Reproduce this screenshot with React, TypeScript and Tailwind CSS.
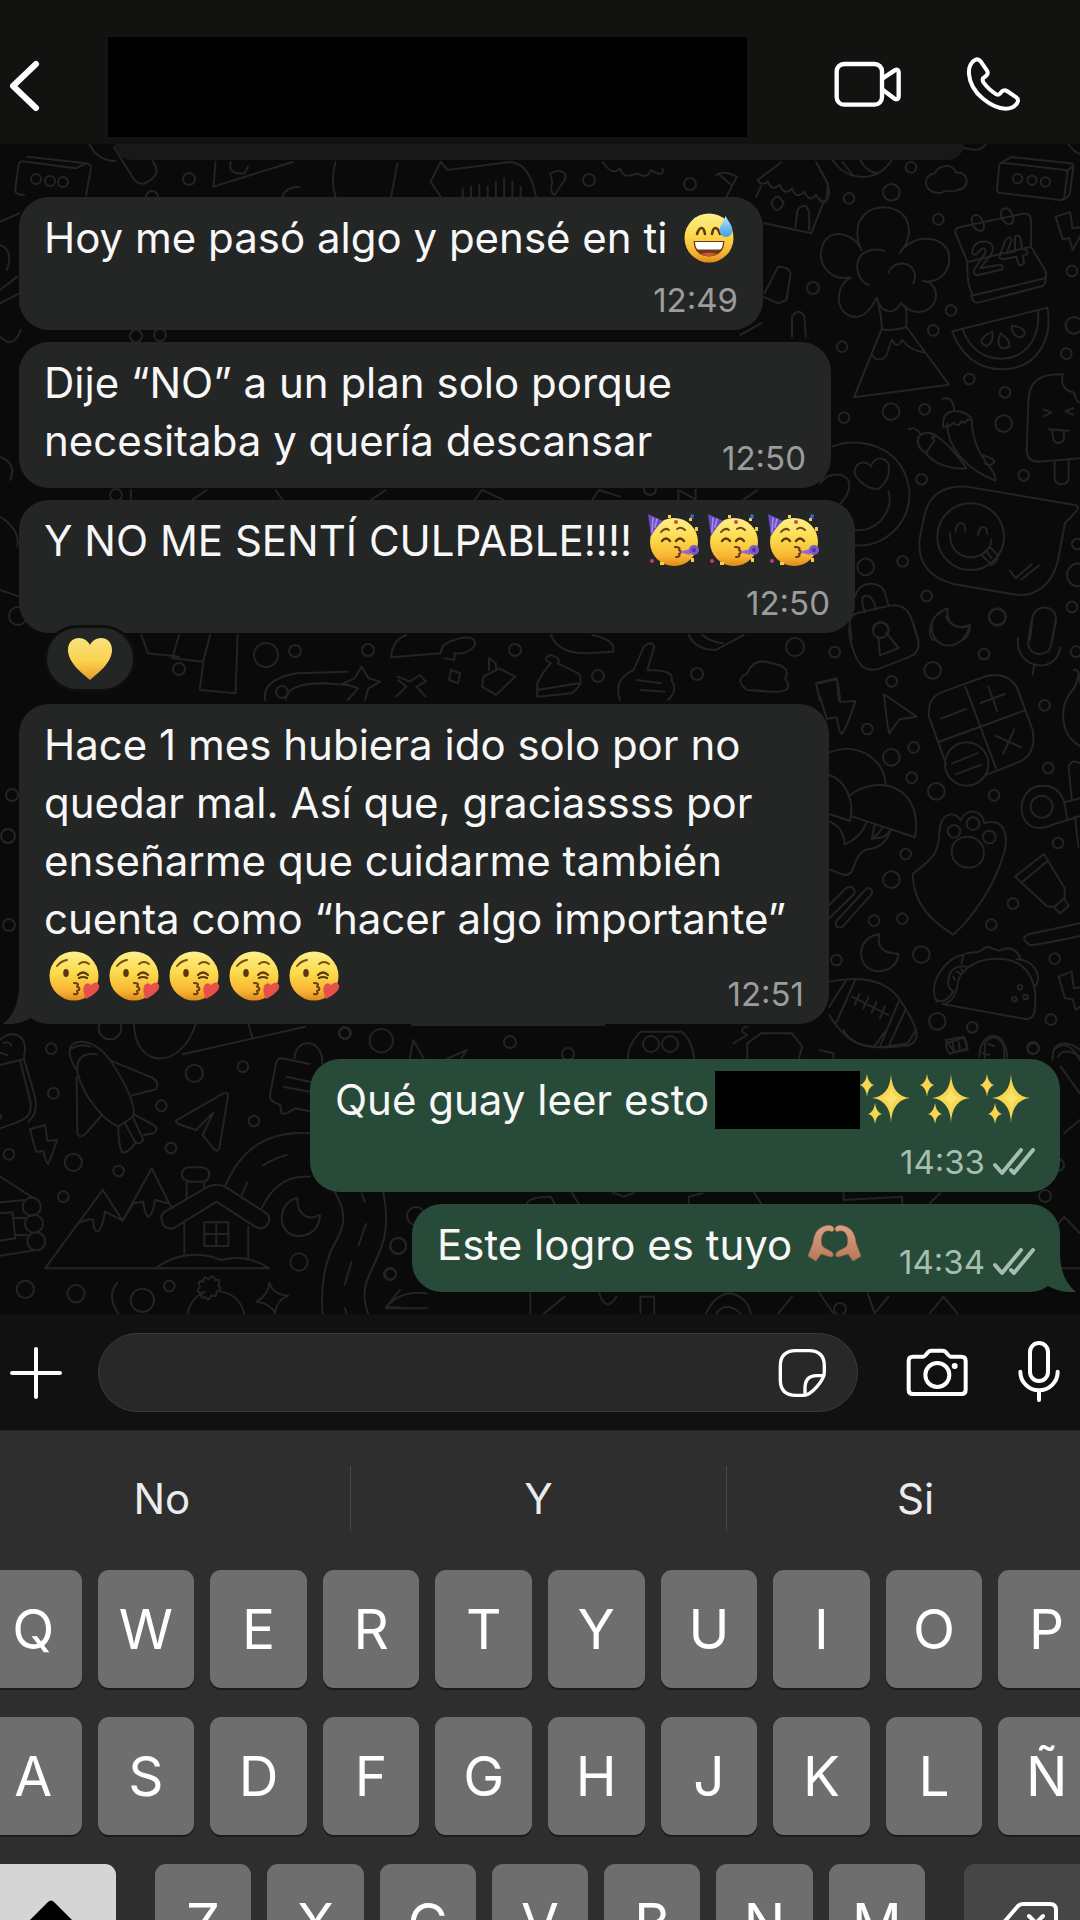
import type { ReactNode } from "react";

type Circle = [number, number, number];

interface DoodleGroup {
  transform: string;
  circles: Circle[];
  paths: string[];
}

// line drawings behind the conversation, grouped by area
const doodles: DoodleGroup[] = [
  {
    // upper right
    transform: "translate(820 140) scale(0.3333)",
    circles: [
      [214, 157, 25], [213, 815, 25], [551, 851, 25], [137, 1281, 25], [532, 1430, 25], [762, 556, 25], [775, 1305, 34],
      [273, 82, 16], [87, 175, 16], [355, 238, 16], [756, 393, 16], [393, 511, 16], [340, 571, 16], [66, 620, 16],
      [739, 641, 16], [448, 717, 16], [555, 757, 16], [314, 808, 16], [72, 833, 16], [611, 1006, 16], [305, 1018, 16],
      [248, 1264, 16], [320, 1368, 16], [756, 1401, 16], [772, 1212, 16],
      [593, 116, 14], [636, 121, 14], [676, 126, 14], [452, 1190, 100], [182, 1470, 24],
    ],
    paths: [
      "M38 60C80 125 170 130 215 60M68 66L98 105M122 62Q140 95 168 98M427 22Q480 40 497 12M745 12Q760 35 780 42M0 90Q40 150 22 178Q10 190 0 178",
      "M350 158C310 155 305 105 345 100C350 75 400 68 408 98C445 92 455 145 412 150C400 160 385 150 375 153Q362 162 350 158Z",
      "M545 68L735 90Q743 92 742 100L733 172Q730 182 720 180L538 158Q530 156 531 148L538 76Q540 68 548 66L575 51L752 70Q762 72 760 82L750 160Q745 172 732 178M742 92L758 78",
      "M124 330C108 300 108 255 124 236C150 190 230 190 258 236C276 270 266 310 238 340M124 330C105 280 30 260 8 315C-12 370 30 425 92 412M146 435C105 420 98 350 140 335Q165 323 192 333M205 398C220 365 265 360 281 392Q290 412 280 430M240 338C280 280 365 285 385 335C398 390 360 432 308 423M92 412C45 440 45 510 90 528C130 540 150 510 170 474C185 525 225 525 243 488C270 525 320 525 342 490C358 455 340 425 308 423",
      "M175 490Q185 530 186 568Q220 574 258 562Q262 525 256 498M184 570L102 772L387 734L262 564M154 640Q165 665 190 656C210 645 205 605 217 600C225 620 235 620 247 600C265 625 290 635 315 638",
      "M442 366L407 280Q403 266 418 262L605 222Q632 216 633 242V320L675 390Q682 405 675 415L460 466Q440 440 442 370ZM452 466L460 482Q464 490 475 488L668 438Q680 430 677 408M442 366L633 320",
      "M455 240Q455 225 470 224Q485 228 492 255Q495 272 480 273Q460 270 455 240ZM542 218Q545 205 560 205Q575 210 580 235Q580 253 566 253Q545 248 542 218Z",
      "M456 336Q462 300 500 305Q530 315 512 345L480 385L540 374Q550 376 548 388L475 405Q458 405 462 390L495 340Q500 322 485 326L468 344Q456 345 456 336ZM556 300Q568 285 575 300L560 340L585 334V290Q598 280 602 298L606 328Q625 325 622 342L608 348L612 370Q600 382 594 370L590 350L548 358Q535 355 540 345Z",
      "M397 574L682 503C700 600 650 688 545 688C470 688 420 640 397 574ZM428 568C450 625 485 656 545 656C620 655 662 590 654 512",
      "M518 575Q484 590 484 605Q490 618 502 617Q520 610 518 575ZM542 580Q530 605 540 620Q552 630 567 620Q575 605 542 580ZM575 557Q575 585 597 592Q615 590 614 575Q605 560 575 557Z",
      "M728 703C650 700 625 730 625 790L620 930Q622 965 655 965L780 955M728 703Q720 745 752 755Q765 755 766 770Q770 785 780 788M704 965V1010Q704 1033 725 1033Q746 1033 746 1010V960M671 808L695 818L673 828M760 804L736 814L760 824M686 868L746 872M697 870L699 895Q702 910 718 909Q732 906 732 892V872",
      "M368 776Q400 768 403 812M370 860Q365 820 400 813Q440 812 455 838L440 840Q435 855 425 843Q415 865 400 848Q385 865 368 858M382 850C380 920 440 990 526 1022C530 980 460 960 455 840M266 868Q285 858 300 880M318 940Q285 920 296 890Q320 868 350 888L335 892Q350 905 335 912Q325 930 318 940M350 888C380 910 400 930 440 985C390 990 340 970 318 940M488 945Q530 960 522 968Q510 980 495 970",
      "M37 920C120 885 250 920 268 1050C275 1150 190 1225 105 1216M205 1055C225 1110 170 1180 105 1170M175 1048C130 1045 95 1005 106 985C115 960 145 965 153 980C160 950 200 945 207 980Q210 1020 175 1048ZM0 1030C25 995 80 995 88 1030Q90 1060 62 1090",
      "M440 1040L765 1095Q780 1100 770 1112L735 1150L718 1240C705 1330 650 1375 580 1363L400 1332C320 1310 290 1260 300 1190L315 1120C330 1065 370 1035 440 1040ZM390 1180C390 1250 450 1265 490 1240Q515 1225 513 1200M406 1175Q410 1150 422 1149Q436 1150 436 1172M474 1185Q478 1160 490 1161Q502 1162 502 1182M485 1245L515 1275Q535 1265 532 1245L510 1220ZM500 1235L515 1255M570 1292L587 1315L635 1273M605 1318L658 1276",
      "M106 1370C115 1320 185 1320 195 1360L205 1395M135 1418Q115 1360 145 1368Q160 1375 168 1408M90 1455Q85 1430 110 1420L210 1397Q250 1390 270 1425L295 1500M90 1455L95 1500M382 1405C320 1430 320 1500 345 1500M382 1405C380 1455 410 1470 450 1458Q448 1490 430 1500M630 1500L638 1430C650 1390 705 1395 708 1435L698 1500M707 230L750 216Q755 240 757 265L780 262M707 230L728 298L748 294L758 330L780 290",
    ],
  },
  {
    // middle right
    transform: "translate(820 620) scale(0.3333)",
    circles: [
      [338, 151, 25], [214, 412, 25], [349, 514, 25], [214, 779, 25], [304, 1004, 25], [352, 1204, 25],
      [44, 96, 16], [492, 102, 16], [215, 184, 16], [142, 327, 16], [281, 382, 16], [275, 473, 16], [674, 256, 16],
      [685, 444, 16], [522, 526, 16], [714, 669, 16], [257, 702, 16], [579, 851, 16], [162, 902, 16], [247, 896, 16],
      [514, 914, 16], [49, 1020, 16], [704, 1016, 16], [693, 1199, 16], [457, 1222, 16], [640, 1286, 16], [768, 95, 16],
      [440, 432, 65], [402, 634, 19], [459, 611, 19], [508, 651, 19], [665, 560, 33],
      [600, 1102, 7], [617, 1131, 7], [583, 1138, 7], [532, -8, 25],
    ],
    paths: [
      "M88 20C85 50 105 140 145 148Q160 152 180 145L270 110Q300 100 295 60L280 10M160 30A23 23 0 1 1 205 38M175 52L180 106L236 84L198 38M335 10C330 95 430 100 450 15Q400 35 378 -10",
      "M635 0L624 70Q630 102 660 102Q690 100 693 75L708 0M594 55C585 150 710 165 721 82M642 138L638 164",
      "M0 190L50 178Q58 200 60 246L106 243Q90 300 66 342Q58 340 50 292L20 296L0 230M192 224Q188 220 200 228L290 290L238 298L208 340Q200 310 192 224Z",
      "M327 290Q322 230 370 215L500 168Q560 155 590 200L638 330Q650 400 600 425L500 464M378 432L327 290M436 200L528 445M355 366L612 272M362 296L438 267M482 249L555 222M505 200L532 273M528 348L603 382M583 328L550 401M396 430L472 400M408 463L484 434",
      "M28 398C120 360 200 430 196 494M90 525C180 460 310 500 285 652L98 590M28 465C75 480 105 540 90 603L28 582M28 605Q70 620 74 673Q120 655 140 608M165 612L155 656Q200 655 210 632M28 748C60 760 80 775 95 755C110 720 115 690 150 687Q195 680 210 635M188 620Q180 640 155 656",
      "M278 762C330 720 355 710 358 640C360 580 400 570 422 600C440 560 490 570 493 610C560 590 570 660 545 720C520 800 460 890 400 944C330 900 280 850 278 762ZM395 695C395 635 490 635 492 700C490 758 398 758 395 695Z",
      "M780 535L733 547Q715 490 655 498C580 515 590 640 675 622L742 600L780 588M733 547L742 600M755 535L746 440Q755 415 780 430M765 590L775 680M762 150Q780 145 780 190M775 165Q770 200 750 220C715 270 725 350 780 378",
      "M672 702L585 770L680 858L702 862L734 834V805ZM684 722L608 785M702 862L720 880L746 858L734 838M28 855L80 803Q105 795 104 820L28 895M48 905L135 810Q155 795 157 820L68 920Q45 930 48 905M780 910L625 943Q608 950 614 962L630 976Q680 970 780 948",
      "M178 942C110 950 105 1040 165 1053C210 1058 235 1030 235 1001Q165 1000 178 942ZM28 1085C130 1065 200 1080 240 1140C300 1230 300 1260 270 1275C150 1290 90 1290 28 1185M78 1082L28 1160M106 1080L48 1210M236 1145L182 1275M256 1170L208 1275M96 1130L204 1185M118 1122L104 1155M145 1132L130 1165M170 1145L155 1178M194 1160L180 1195",
      "M350 1145C320 1090 380 1010 430 1005C450 990 470 1005 485 990C510 965 525 1000 545 990C575 975 600 1000 600 1018M368 1152L620 1198Q645 1195 645 1160C655 1070 610 1015 530 1016C450 1015 410 1070 412 1100Q400 1150 368 1152M590 1018C640 1020 670 1065 645 1100M400 1115Q375 1100 390 1060Q405 1035 440 1040M424 1030L430 1008M350 1140Q375 1155 400 1115M400 1070L404 1080M410 1055L420 1060M424 1048L430 1055",
      "M716 1070L755 1055Q758 1080 762 1105L780 1102M716 1070L735 1135L758 1138L768 1170L780 1160M378 1270L430 1253Q443 1270 442 1285L390 1302Q378 1290 378 1270M398 1266L402 1295M415 1262L420 1290M478 1310C480 1230 560 1220 562 1320M505 1272L522 1278M488 1300L508 1305M698 1320C695 1260 740 1260 780 1290M715 1310Q730 1280 780 1310",
    ],
  },
  {
    // lower left
    transform: "translate(0 1020) scale(0.3333)",
    circles: [
      [330, 24, 34], [583, 160, 26], [220, 427, 26], [76, 808, 26], [228, 821, 26], [427, 841, 35], [897, 726, 26],
      [1144, 62, 35], [154, 86, 16], [160, 220, 16], [484, 257, 16], [729, 140, 16], [762, 303, 16], [513, 384, 16],
      [356, 453, 16], [190, 530, 16], [27, 403, 16], [508, 798, 16], [1034, 40, 16], [1172, 762, 16], [1195, 677, 24],
      [95, 560, 27], [102, 611, 27], [109, 664, 27], [-5, 290, 8],
    ],
    paths: [
      "M402 12C405 150 545 150 587 12M548 103L915 20M745 12L757 52M0 60C40 25 75 50 75 85L72 115M10 68Q30 65 35 78M0 98L22 105M0 135L60 120L90 240C100 290 80 300 0 325M60 120L72 118L105 230C112 270 105 285 85 305",
      "M215 75C240 55 290 65 330 120C370 180 410 250 400 290L355 320C310 300 250 230 232 155C205 110 205 90 215 75ZM232 150Q230 95 290 103M215 85Q240 70 270 80M332 122L455 172Q480 185 468 208L397 226M230 170L232 340Q240 358 258 340L303 288M355 322Q355 370 365 395Q380 405 405 370M405 285L460 315Q478 325 462 340L432 345M375 310L405 365Q415 378 430 360L402 298",
      "M528 302L670 220Q685 215 684 230L658 385Q650 400 640 385L608 345L640 278L588 330L535 312Q528 308 528 302ZM90 328L135 315Q140 340 142 362L172 360L145 432Q138 430 130 394L108 395Z",
      "M884 115C885 50 970 55 967 130M930 132L845 115Q832 115 828 130L810 225Q808 240 825 248L840 254L845 280Q855 285 885 265L930 274M860 170L930 185M852 201L930 215",
      "M0 470L98 533M0 547L75 540M0 580L38 577L46 655L0 662M38 594H78M44 645H82M0 707L108 690",
      "M135 745L308 510L368 602L455 445L515 565M240 607L270 597L280 600Q280 635 295 635Q308 620 315 575L368 602L400 550L430 545Q435 590 447 590Q460 580 465 540L505 550M135 745H808Q740 700 665 720Q560 680 470 742",
      "M553 610V700M745 620V712M485 600Q480 585 495 575L625 500Q650 488 675 500L800 580Q815 595 802 615Q785 632 765 620L650 545L520 625Q490 630 485 600ZM613 607H685V678H613ZM649 607V678M613 642H685M560 535V488M612 500V488M570 485Q545 480 545 462Q548 442 570 442H605Q628 445 628 465Q625 485 605 485Z",
      "M675 500C720 390 800 330 930 340M785 565C820 490 870 465 930 470M790 436Q820 415 860 405M725 525L742 488M892 533C830 550 830 640 890 648C930 650 960 625 960 585C920 605 890 580 892 533ZM1005 517C1060 610 1010 650 990 700Q960 780 968 882M1150 517C1175 650 1140 690 1110 760Q1080 820 1105 882M1085 520L1094 545M1098 612L1076 676M1055 725L1034 795M1035 865L1040 882",
      "M352 788Q318 830 356 882M562 882Q575 830 615 815M662 815Q720 825 733 882M600 800Q590 780 610 785Q610 765 625 778Q640 760 645 780Q665 775 655 795Q670 810 650 815Q650 835 635 825Q625 850 615 830Q600 840 605 820Q585 815 600 800ZM808 788Q820 825 865 827Q830 840 825 878Q810 850 770 845Q805 825 808 788ZM1200 810L1158 862H1200",
    ],
  },
  {
    // strip under the header
    transform: "scale(0.6887 0.3333)",
    circles: [],
    paths: [
      "M40 470L125 490Q133 493 132 505L125 585M125 490L110 505L38 485Q28 480 27 495L22 570Q22 585 35 585M130 432Q140 480 168 484M165 440L195 540Q205 560 215 545Q235 520 222 484M313 486L310 560L425 486M335 486Q330 525 355 520L360 500M487 486Q480 540 487 590M577 490L568 590M640 486L625 545L640 590M640 486L650 510L740 486Q770 490 778 590M672 590V565M684 590V560M696 590V555M708 590V560M720 590V545M732 590V535M744 590V545M756 590V560",
      "M800 530Q795 520 810 512Q825 515 820 540L805 585Q798 580 802 545ZM875 486Q890 530 900 505Q905 540 925 520Q940 540 945 510Q965 535 962 505M1040 525Q1050 510 1070 530L1055 590M1045 525L1062 555M410 590Q415 560 435 560",
      "M1135 486L1100 540Q1105 560 1115 545Q1120 575 1132 555Q1140 590 1150 565Q1155 600 1168 575Q1175 610 1185 585Q1195 620 1200 600L1202 550L1185 486M1105 560L1098 590M1195 610L1178 700L1110 670M1155 680L1158 630Q1170 600 1175 640V690M1120 610Q1128 570 1138 610Q1128 650 1120 610Z",
      "M1110 880L1130 800Q1145 800 1148 820L1142 900L1130 910L1108 890M0 665L28 640M0 735Q20 750 10 810M0 870L25 830M0 910L28 880M1150 1010V950Q1160 920 1168 950L1170 1010M1075 1005L1105 970",
    ],
  },
  {
    // strip around the reaction
    transform: "translate(0 330) scale(0.6887 0.3333)",
    circles: [],
    paths: [
      "M0 20Q20 60 30 0M0 380Q25 400 15 450M0 560Q30 600 25 650M0 780L28 800M190 508V480M280 508L300 480M400 480L410 508M540 508L560 480M690 508L700 480L730 508M860 508L870 480L900 500M985 508V480L1010 508V480M1080 508L1100 480",
      "M205 915L215 970L260 980M260 915L250 985L295 995L305 915M345 915L342 1090L290 1080L295 1000M568 980Q570 930 590 915M568 982L640 970Q640 940 660 930Q690 910 690 945Q680 975 660 970V990L645 985M800 915Q810 970 850 970L890 965Q895 930 860 915M1000 915Q1010 960 1040 960L1080 915M1020 915Q1030 935 1050 940",
      "M385 1110Q380 1050 430 1030L505 1025M415 1110Q415 1060 470 1060L505 1065M505 1110L520 1075L498 1060L515 1045L525 1010L535 1045L552 1055L535 1075L530 1110M578 1040L595 1055L610 1035L618 1055L605 1070L618 1100M578 1050L590 1070L575 1100M655 1020L668 1030L665 1060L652 1050ZM702 1040L725 1015L748 1040L720 1095L700 1070ZM710 1020V985L720 1000V1015M780 1060Q790 1020 800 1000Q785 985 800 975Q815 985 810 1000L840 1030Q850 1060 830 1090L780 1100ZM780 1080L840 1060",
      "M900 1110Q890 1050 920 1020L935 950Q945 930 950 950L940 1020Q980 1020 975 1050Q985 1080 970 1110M925 1050L960 1060M930 1080L965 1085M1085 1080Q1065 1050 1085 1030Q1095 980 1120 1000Q1150 1010 1140 1045Q1155 1090 1120 1085ZM1190 1110L1185 1060L1215 1045L1218 1110",
    ],
  },
  {
    // strips above, between and below the replies
    transform: "translate(0 1030) scale(0.6887 0.3333)",
    circles: [],
    paths: [
      "M598 -15H878M595 85L600 30L615 85M650 85L678 60L670 85M912 85Q910 50 930 5H990Q1005 30 1008 85M1065 40L1085 15Q1070 0 1085 -10M1085 85V40L1105 10H1150L1165 50L1160 85M1190 60L1210 70V85M1225 0Q1235 50 1280 52L1318 40L1330 0M1270 48L1285 5M1373 30L1400 20L1405 60L1385 65ZM1430 85V40Q1445 0 1458 50V85M1530 60Q1550 20 1568 90M1540 110L1568 190M1545 310L1568 270",
      "M765 520Q770 500 800 500L805 520M830 488L840 520M890 488L905 500L920 490M1000 520V500L1020 490M1105 520L1095 488M1225 488V510L1310 500V520M1365 490L1350 520M1568 610L1545 560L1530 600M1540 715H1568M560 835Q580 780 620 790M560 835H620M770 790V850M790 850L820 800M870 790Q880 850 895 800M930 850V800H950V850M1025 850Q1040 790 1060 790Q1085 800 1090 850M1040 850Q1055 810 1075 850M1130 850L1150 800M1190 790L1210 850M1260 790L1270 850L1290 800M1350 850L1370 800L1390 850",
    ],
  },
  {
    // loose dots, in screen units
    transform: "",
    circles: [
      [36, 179, 5], [50, 181, 5], [63, 182, 5], [189, 179, 6], [152, 197, 6], [589, 180, 6], [690, 184, 6], [813, 288, 6],
      [368, 650, 6], [295, 651, 6], [266, 655, 12], [179, 669, 6], [515, 650, 6], [795, 647, 9], [697, 674, 6],
      [598, 676, 6], [18, 616, 9], [282, 692, 6], [12, 795, 6], [8, 836, 7], [9, 925, 6], [345, 1033, 6], [510, 1042, 6],
      [568, 1054, 6], [651, 1044, 8], [670, 1044, 8], [1033, 1048, 6], [416, 1216, 9], [398, 1246, 8], [390, 1274, 6],
      [840, 1309, 6], [1045, 1196, 6], [116, 495, 6], [650, 489, 6], [136, 336, 6], [160, 335, 6], [1058, 1165, 6],
    ],
    paths: [],
  },
];

function Doodles() {
  return (
    <svg
      aria-hidden="true"
      viewBox="0 144 1080 1170"
      preserveAspectRatio="xMinYMin slice"
      className="absolute inset-0 h-full w-full"
      fill="none"
      stroke="#242424"
      strokeWidth="2"
      strokeLinecap="round"
      strokeLinejoin="round"
    >
      {doodles.map((group, i) => (
        <g key={i} transform={group.transform || undefined}>
          {group.circles.map(([cx, cy, r], j) => (
            <circle key={j} cx={cx} cy={cy} r={r} vectorEffect="non-scaling-stroke" />
          ))}
          {group.paths.map((d, j) => (
            <path key={j} d={d} vectorEffect="non-scaling-stroke" />
          ))}
        </g>
      ))}
    </svg>
  );
}

// shared emoji gradients
function EmojiDefs() {
  return (
    <svg aria-hidden="true" className="absolute h-0 w-0">
      <defs>
        <linearGradient id="face" x1="0" y1="0" x2="0" y2="1">
          <stop offset="0" stopColor="#fdf08b" />
          <stop offset="0.45" stopColor="#fcd94a" />
          <stop offset="0.8" stopColor="#f7b531" />
          <stop offset="1" stopColor="#e08a1c" />
        </linearGradient>
        <linearGradient id="heart" x1="0" y1="0" x2="0" y2="1">
          <stop offset="0" stopColor="#f9e27d" />
          <stop offset="0.55" stopColor="#fbd34f" />
          <stop offset="1" stopColor="#e59a2c" />
        </linearGradient>
        <linearGradient id="skin" x1="0" y1="0" x2="0" y2="1">
          <stop offset="0" stopColor="#d9a283" />
          <stop offset="1" stopColor="#b87858" />
        </linearGradient>
        <linearGradient id="drop" x1="0" y1="0" x2="0" y2="1">
          <stop offset="0" stopColor="#b9e6fa" />
          <stop offset="1" stopColor="#3c9fe0" />
        </linearGradient>
      </defs>
    </svg>
  );
}

function Emoji({ label, children }: { label: string; children: ReactNode }) {
  return (
    <svg
      role="img"
      aria-label={label}
      viewBox="0 0 52 52"
      className="mx-1 inline-block h-[52px] w-[52px] overflow-visible align-[-10px]"
      fill="none"
      strokeLinecap="round"
      strokeLinejoin="round"
    >
      {children}
    </svg>
  );
}

function SweatSmile() {
  return (
    <Emoji label="😅">
      <circle cx="26" cy="27" r="24.5" fill="url(#face)" />
      <path d="M14 23Q16 17 18.500 17Q21 17 22 23M29 23Q30 17 32.500 17Q35 17 37 23" stroke="#5b3712" strokeWidth="2.600" />
      <path d="M10.500 30H41.500Q41 45 26 45.500Q11 45 10.500 30Z" fill="#6b3a16" />
      <path d="M12 31H40Q39.500 38 37 38.500H15Q12.500 38 12 31Z" fill="#fff" />
      <path d="M18 43Q26 40 34 43Q31 45 26 45.200Q21 45 18 43Z" fill="#c95a2f" />
      <path d="M42.500 5C46 11 49.500 15 49.500 19.500A6.500 6.500 0 0 1 36.500 19.500C36.500 15 40.500 11 42.500 5Z" fill="url(#drop)" />
    </Emoji>
  );
}

function PartyFace() {
  return (
    <Emoji label="🥳">
      <circle cx="26" cy="28" r="24" fill="url(#face)" />
      <path d="M0 0L15 7Q9 12 3 22Z" fill="#6c4cc4" />
      <path d="M5 4L4 18M9 5L7 13" stroke="#a58be8" strokeWidth="1.600" />
      <path d="M13 18Q17 13 21 16M29 15Q33 12 37 16" stroke="#6b4214" strokeWidth="2" />
      <path d="M14 27Q18 22 22 27M28 27Q32 22 36 27" stroke="#5b3712" strokeWidth="2.400" />
      <path d="M27 33Q33 33 31 36Q35 38 31 40Q33 43 28 43" stroke="#6b3a16" strokeWidth="2" />
      <path d="M31 38L42 35V41Z" fill="#8e6ad6" />
      <circle cx="46" cy="36" r="5" fill="#7a58c8" />
      <circle cx="46" cy="36" r="2" fill="#4f3595" />
      <circle cx="28" cy="8" r="2" fill="#e0472f" />
      <path d="M20 1H23V4H20ZM41 4H44V7H41ZM47 13H50V17H47ZM12 48H16V51H12ZM43 44H46V48H43Z" fill="#f6d043" />
      <path d="M43 0L46 1L45 5L42 4Z" fill="#3a6fc9" />
      <circle cx="4" cy="47" r="2" fill="#c23b78" />
    </Emoji>
  );
}

function KissFace() {
  return (
    <Emoji label="😘">
      <circle cx="26" cy="26" r="24.500" fill="url(#face)" />
      <path d="M9 16Q13 11 19 10M31 14Q36 10 41 14" stroke="#7a4a12" strokeWidth="2" />
      <ellipse cx="18" cy="23" rx="2.800" ry="4" fill="#5b3712" />
      <path d="M30 25Q35 20 40 25M31 28Q35 26 39 28" stroke="#5b3712" strokeWidth="2.200" />
      <path d="M26 33Q32 33 29 36.500Q34 39 29 41Q31 45 26 44" stroke="#6b3a16" strokeWidth="2" />
      <path d="M38 49Q34 41 36 36Q39 31 43 35Q48 30 51 35Q53 41 38 49Z" fill="#e8504a" />
    </Emoji>
  );
}

function Sparkles() {
  return (
    <Emoji label="✨">
      <g fill="#f7d550">
        <path d="M27 1Q28 23 46 25Q28 27 27 50Q26 27 8 25Q26 23 27 1Z" />
        <path d="M3 1Q4 10 10 12Q4 14 3 24Q2 14 -4 12Q2 10 3 1Z" />
        <path d="M11 30Q12 39 18 41Q12 42 11 51Q10 42 4 41Q10 39 11 30Z" />
      </g>
      <path d="M27 14Q28 24 36 25Q28 26 27 37Q26 26 18 25Q26 24 27 14Z" fill="#fbe36a" />
    </Emoji>
  );
}

function HeartHands() {
  return (
    <Emoji label="🫶🏽">
      <g fill="url(#skin)" stroke="#a5694c" strokeWidth="0.5">
        <path d="M0 38L5 25Q6 13 14 9Q23 5 26 10Q26 15 22 13Q16 12 14 18Q12 25 15 29L24 34Q27 38 23 39L13 36L8 43Z" />
        <path d="M53 38L48 25Q47 13 39 9Q30 5 27 10Q27 15 31 13Q37 12 39 18Q41 25 38 29L29 34Q26 38 30 39L40 36L45 43Z" />
      </g>
    </Emoji>
  );
}

function Checks() {
  return (
    <svg
      role="img"
      aria-label="Entregado"
      viewBox="0 0 42 28"
      className="h-7 w-[42px]"
      fill="none"
      stroke="#a5beb0"
      strokeWidth="4"
      strokeLinecap="round"
      strokeLinejoin="round"
    >
      <path d="M2 17L9 25L28 2M18 22L21 25L40 2" />
    </svg>
  );
}

interface BubbleProps {
  time: string;
  sent?: boolean;
  below?: boolean; // time on its own line under the text
  tail?: boolean;
  width: string;
  children: ReactNode;
}

function Bubble({ time, sent, below, tail, width, children }: BubbleProps) {
  return (
    <div
      className={`relative grid max-w-full grid-cols-1 rounded-[30px] px-[25px] py-3 ${width} ${
        sent ? "self-end bg-[#274a39]" : "self-start bg-[#242626]"
      }`}
    >
      {tail && (
        <svg
          aria-hidden="true"
          viewBox="0 0 36 40"
          className={`absolute bottom-0 h-10 w-9 ${sent ? "-right-4 -scale-x-100" : "-left-4"}`}
          fill={sent ? "#274a39" : "#242626"}
        >
          <path d="M16 0V4Q15 28 0 40Q14 41 26 35L36 30V0Z" />
        </svg>
      )}
      <p
        className={`relative col-start-1 row-start-1 text-[42px] leading-[58px] whitespace-nowrap text-[#f7f7f7] ${
          below ? "mb-[51px]" : "mb-1.5"
        }`}
      >
        {children}
      </p>
      <div
        className={`relative col-start-1 row-start-1 flex items-center gap-2 self-end justify-self-end text-[33px] leading-9 ${
          sent ? "text-[#a5beb0]" : "text-[#9b9c9c]"
        }`}
      >
        <time>{time}</time>
        {sent && <Checks />}
      </div>
    </div>
  );
}

function Header() {
  return (
    <header className="flex items-center bg-[#121211] pt-[37px] pr-[58px] pb-[7px] pl-2">
      <button type="button" aria-label="Volver" className="mr-[66px]">
        <svg viewBox="0 0 34 54" className="h-[54px] w-[34px]" fill="none" stroke="#fff" strokeWidth="6" strokeLinecap="round" strokeLinejoin="round">
          <path d="M28 4L5 26L28 48" />
        </svg>
      </button>
      <div className="h-[100px] flex-1 bg-black" />
      <button type="button" aria-label="Videollamada" className="mb-1.5 ml-[87px]">
        <svg viewBox="102 60 204 141" className="h-[47px] w-[68px]" fill="none" stroke="#fff" strokeWidth="13" strokeLinecap="round" strokeLinejoin="round">
          <rect x="110" y="69" width="136" height="122" rx="22" />
          <path d="M248 112L284 88Q296 82 296 94V166Q296 178 284 173L248 146" />
        </svg>
      </button>
      <button type="button" aria-label="Llamar" className="mb-1.5 ml-[63px]">
        <svg viewBox="496 46 171 171" className="h-[57px] w-[57px]" fill="none" stroke="#fff" strokeWidth="12" strokeLinecap="round" strokeLinejoin="round">
          <path d="M508 100C506 78 516 62 528 57Q536 54 543 62L562 90Q567 98 560 105L550 113Q547 118 552 126C564 143 577 153 590 161Q596 164 602 158L607 152Q614 146 622 151L650 170Q658 176 653 186C645 200 635 204 618 204C580 204 512 160 508 100Z" />
        </svg>
      </button>
    </header>
  );
}

function Composer() {
  return (
    <form className="flex items-center bg-[#111] pt-[19px] pr-5 pb-[18px] pl-2.5">
      <button type="button" aria-label="Adjuntar" className="mr-9 shrink-0">
        <svg viewBox="0 0 52 52" className="h-[52px] w-[52px]" stroke="#fff" strokeWidth="4" strokeLinecap="round">
          <path d="M26 2V50M2 26H50" />
        </svg>
      </button>
      <div className="flex h-[79px] min-w-0 flex-1 items-center rounded-full border border-[#3b3b3b] bg-[#282828] pr-[30px] pl-8">
        <input type="text" aria-label="Mensaje" className="h-full min-w-0 flex-1 bg-transparent text-[42px] text-white outline-none" />
        <button type="button" aria-label="Stickers" className="shrink-0">
          <svg viewBox="114 84 147 150" className="h-[50px] w-[49px]" fill="none" stroke="#fff" strokeWidth="10" strokeLinecap="round" strokeLinejoin="round">
            <path d="M190 226H168Q121 226 121 180V138Q121 92 168 92H206Q253 92 253 138V156C253 180 215 226 190 226Z" />
            <path d="M195 224V205Q195 167 230 167H251" />
          </svg>
        </button>
      </div>
      <button type="button" aria-label="Cámara" className="ml-12 shrink-0">
        <svg viewBox="496 84 186 147" className="h-[49px] w-[62px]" fill="none" stroke="#fff" strokeWidth="12" strokeLinejoin="round">
          <path d="M548 110Q552 110 562 97Q566 92 572 92H606Q612 92 616 97Q626 110 630 110H662Q675 110 675 122V209Q675 222 662 222H517Q504 222 504 209V122Q504 110 517 110Z" />
          <circle cx="590" cy="165" r="36" />
          <circle cx="642" cy="138" r="9" fill="#fff" stroke="none" />
        </svg>
      </button>
      <button type="button" aria-label="Nota de voz" className="mb-1 ml-[50px] shrink-0">
        <svg viewBox="832 60 126 186" className="h-[62px] w-[42px]" fill="none" stroke="#fff" strokeWidth="12" strokeLinecap="round">
          <rect x="868" y="69" width="54" height="114" rx="27" />
          <path d="M839 155A56 56 0 0 0 951 155M895 211V240" />
        </svg>
      </button>
    </form>
  );
}

function Key({ letter }: { letter: string }) {
  return (
    <button
      type="button"
      className="h-[118px] rounded-[11px] bg-[#6e6e6e] text-center text-[55px] leading-none text-white shadow-[0_2px_0_#1b1b1b]"
    >
      {letter}
    </button>
  );
}

const suggestions = ["No", "Y", "Si"];

function Keyboard() {
  return (
    <section aria-label="Teclado" className="border-t border-[#232323] bg-[#2e2e2e]">
      <div className="-mr-6 -ml-[26px] grid h-[139px] grid-cols-3 items-center divide-x divide-[#4a4a4a] pb-1">
        {suggestions.map((word) => (
          <button key={word} type="button" className="h-[65px] text-[42px] leading-none text-[#ebebeb]">
            {word}
          </button>
        ))}
      </div>
      <div className="-mx-[15px] flex flex-col gap-[29px]">
        {["QWERTYUIOP", "ASDFGHJKLÑ"].map((row) => (
          <div key={row} className="grid grid-cols-10 gap-4">
            {row.split("").map((letter) => (
              <Key key={letter} letter={letter} />
            ))}
          </div>
        ))}
        <div className="flex gap-[39px]">
          <button
            type="button"
            aria-label="Mayúsculas"
            className="flex h-[118px] w-[131px] items-center justify-center rounded-[11px] bg-[#d5d5d5]"
          >
            <svg viewBox="0 0 54 46" className="h-[46px] w-[54px]" fill="#000">
              <path d="M24 2Q27 -1 30 2L52 24Q54 28 50 28H39V42Q39 45 36 45H18Q15 45 15 42V28H4Q0 28 2 24Z" />
            </svg>
          </button>
          <div className="grid flex-1 grid-cols-7 gap-4">
            {"ZXCVBNM".split("").map((letter) => (
              <Key key={letter} letter={letter} />
            ))}
          </div>
          <button
            type="button"
            aria-label="Borrar"
            className="flex h-[118px] w-[131px] items-center justify-center rounded-[11px] bg-[#464646]"
          >
            <svg viewBox="0 0 58 44" className="h-11 w-[58px]" fill="none" stroke="#fff" strokeWidth="4" strokeLinecap="round" strokeLinejoin="round">
              <path d="M22 3H49Q55 3 55 9V35Q55 41 49 41H22Q19 41 17 39L4 24Q2 22 4 20L17 5Q19 3 22 3ZM28 15L42 29M42 15L28 29" />
            </svg>
          </button>
        </div>
      </div>
    </section>
  );
}

export default function App() {
  return (
    <div className="flex h-screen flex-col overflow-hidden bg-[#0a0a0a] font-['Inter','Liberation_Sans',sans-serif]">
      <EmojiDefs />
      <Header />
      <main className="relative shrink-0 overflow-hidden pr-5 pb-[22px] pl-[19px]">
        <Doodles />
        <div className="relative flex flex-col gap-3">
          <div className="mr-24 mb-[25px] ml-24 h-4 rounded-b-[30px] bg-[#181818]" />
          <Bubble time="12:49" below width="w-[744px]">
            Hoy me pasó algo y pensé en ti <SweatSmile />
          </Bubble>
          <Bubble time="12:50" width="w-[812px]">
            Dije “NO” a un plan solo porque
            <br />
            necesitaba y quería descansar
          </Bubble>
          <div className="flex flex-col">
            <Bubble time="12:50" below width="w-[836px]">
              Y NO ME SENTÍ CULPABLE!!!! <PartyFace />
              <PartyFace />
              <PartyFace />
            </Bubble>
            <button
              type="button"
              aria-label="Reacción: corazón amarillo"
              className="relative -mt-2 ml-[25px] flex h-[67px] w-[92px] items-center justify-center rounded-full border-3 border-[#0d0e0e] bg-[#242626]"
            >
              <svg viewBox="0 0 46 44" className="h-11 w-[46px]" fill="url(#heart)">
                <path d="M23 43C16 37 1 26 1 13C1 5 6 1 12 1C17 1 21 4 23 8C25 4 29 1 34 1C40 1 45 5 45 13C45 26 30 37 23 43Z" />
              </svg>
            </button>
          </div>
          <Bubble time="12:51" tail width="w-[810px]">
            Hace 1 mes hubiera ido solo por no
            <br />
            quedar mal. Así que, graciassss por
            <br />
            enseñarme que cuidarme también
            <br />
            cuenta como “hacer algo importante”
            <br />
            <KissFace />
            <KissFace />
            <KissFace />
            <KissFace />
            <KissFace />
          </Bubble>
          <div className="mt-[23px] flex flex-col gap-3">
            <Bubble time="14:33" sent below width="w-[750px]">
              Qué guay leer esto
              <span className="ml-1.5 inline-block h-[58px] w-[145px] bg-black align-top" />
              <Sparkles />
              <Sparkles />
              <Sparkles />
            </Bubble>
            <Bubble time="14:34" sent tail width="w-[648px]">
              Este logro es tuyo <HeartHands />
            </Bubble>
          </div>
        </div>
      </main>
      <Composer />
      <Keyboard />
    </div>
  );
}
